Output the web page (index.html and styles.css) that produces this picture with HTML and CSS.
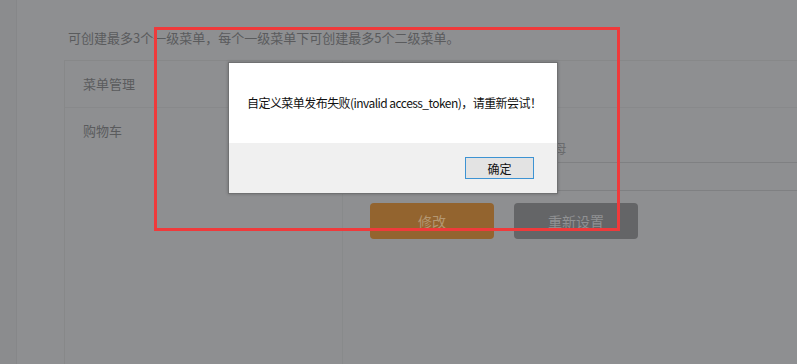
FILE: index.html
```html
<!DOCTYPE html>
<html lang="zh-CN">

<head>
    <meta charset="UTF-8">
    <meta name="viewport" content="width=device-width, initial-scale=1.0">
    <title>自定义菜单</title>
    <link rel="stylesheet" href="styles.css">
</head>

<body>
    <div class="page">
        <div class="side"></div>

        <div class="main">
            <p class="tip">可创建最多3个一级菜单，每个一级菜单下可创建最多5个二级菜单。</p>

            <div class="panel">
                <div class="menu-list">
                    <div class="menu-item">菜单管理</div>
                    <div class="menu-item">购物车</div>
                </div>

                <div class="editor">
                    <div class="editor-head"></div>
                    <div class="editor-body">
                        <p class="hint">菜单名称：最多4个汉字或8个字母</p>
                        <div class="field"></div>
                        <div class="actions">
                            <button class="btn btn-save">修改</button>
                            <button class="btn btn-reset">重新设置</button>
                        </div>
                    </div>
                </div>
            </div>
        </div>
    </div>

    <!-- alert box -->
    <div class="dialog">
        <div class="dialog-body">
            <p class="dialog-msg">自定义菜单发布失败(invalid access_token)，请重新尝试！</p>
        </div>
        <div class="dialog-foot">
            <button class="ok-btn">确定</button>
        </div>
    </div>

    <!-- annotation -->
    <div class="mark"></div>
</body>

</html>
```

FILE: styles.css
```css
body {
    margin: 0;
    width: 797px;
    height: 364px;
    overflow: hidden;
    background-color: #8e8f91;
    font-family: "Noto Sans CJK SC", "Open Sans", sans-serif;
    color: #5a5b5d;
}

.page {
    display: flex;
    height: 364px;
}

.side {
    width: 16px;
    flex-shrink: 0;
    background-color: #8b8c8e;
    border-right: 1px solid #868789;
}

.main {
    flex: 1;
    min-width: 0;
    overflow: hidden;
    padding-left: 47px;
}

.tip {
    margin: 0;
    padding: 29px 0 0 4px;
    height: 60px;
    box-sizing: border-box;
    font-size: 13px;
    line-height: 18px;
    white-space: nowrap;
}

.panel {
    display: flex;
    height: 304px;
    border-top: 1px solid #878889;
    border-left: 1px solid #878889;
}

.menu-list {
    width: 277px;
    flex-shrink: 0;
    border-right: 1px solid #888a8b;
}

.menu-item {
    height: 46px;
    padding-left: 18px;
    font-size: 13px;
    line-height: 46px;
    border-bottom: 1px solid #88898b;
}

.menu-item + .menu-item {
    border-bottom: none;
}

.editor {
    flex: 1;
}

.editor-head {
    height: 46px;
    border-bottom: 1px solid #88898b;
}

.editor-body {
    padding-left: 27px;
}

.hint {
    margin: 0;
    padding-top: 32px;
    font-size: 13px;
    line-height: 16px;
    color: #6a6b6d;
    white-space: nowrap;
}

.field {
    height: 27px;
    margin-top: 6px;
    border: 1px solid #7f8082;
    border-right: none;
}

.actions {
    display: flex;
    gap: 20px;
    margin-top: 12px;
}

.btn {
    width: 124px;
    height: 36px;
    border: none;
    border-radius: 4px;
    font-family: inherit;
    font-size: 14px;
}

.btn-save {
    background-color: #93642f;
    color: #b39772;
}

.btn-reset {
    background-color: #646567;
    color: #909193;
}

.dialog {
    position: absolute;
    left: 228px;
    top: 62px;
    width: 328px;
    border: 1px solid #707172;
    box-shadow: 0 0 3px rgba(0, 0, 0, 0.25);
}

.dialog-body {
    display: flex;
    align-items: center;
    height: 80px;
    padding-left: 18px;
    background-color: #fff;
}

.dialog-msg {
    margin: 0;
    color: #111;
    font-size: 12px;
    line-height: 16px;
    letter-spacing: -0.55px;
    white-space: nowrap;
}

.dialog-foot {
    display: flex;
    justify-content: flex-end;
    height: 50px;
    padding: 14px 23px 0 0;
    box-sizing: border-box;
    background-color: #f0f0f0;
}

.ok-btn {
    width: 69px;
    height: 22px;
    padding: 0;
    border: 1px solid #3d93d3;
    background-color: #e3e3e3;
    color: #111;
    font-family: inherit;
    font-size: 12px;
}

.mark {
    position: absolute;
    left: 154px;
    top: 27px;
    width: 460px;
    height: 198px;
    border: 3px solid #ef3a3b;
}
```
